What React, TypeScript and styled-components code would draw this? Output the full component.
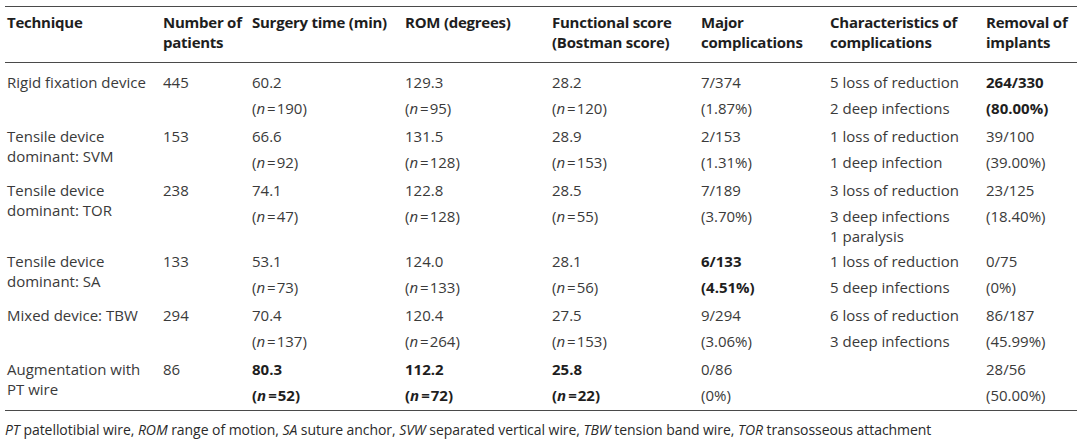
import React from "react";
import styled, { createGlobalStyle } from "styled-components";

const GlobalStyle = createGlobalStyle`
  html, body { margin: 0; padding: 0; background: #ffffff; }
  body { font-family: "Open Sans", "Liberation Sans", sans-serif; }
`;

const Page = styled.div`
  width: 1080px;
  padding: 6px 3px 0 5px;
  box-sizing: border-box;
`;

const Table = styled.table`
  width: 1072px;
  border-collapse: collapse;
  table-layout: fixed;
  border-top: 1px solid #4a4a4a;
  border-bottom: 1px solid #4a4a4a;
`;

const Head = styled.th`
  text-align: left;
  vertical-align: top;
  font-size: 15px;
  font-weight: 700;
  line-height: 20px;
  color: #1e1e1e;
  padding: 5px 2px 10px;
  border-bottom: 1px solid #4a4a4a;
  letter-spacing: -0.25px;
  white-space: nowrap;
`;

type Part = "a" | "b" | "span";

const padTop = (p: { $part: Part; $first?: boolean }) => (p.$part === "b" ? 4 : p.$first ? 9 : 5);
const padBottom = (p: { $part: Part; $last?: boolean; $tight?: boolean }) =>
  p.$tight ? 0 : p.$part === "a" ? 2 : p.$last ? 5 : 3;

const Cell = styled.td<{ $part: Part; $bold?: boolean; $first?: boolean; $last?: boolean; $tight?: boolean }>`
  vertical-align: top;
  font-size: 15px;
  line-height: 20px;
  color: ${(p) => (p.$bold ? "#1e1e1e" : "#3a3a3a")};
  font-weight: ${(p) => (p.$bold ? 700 : 400)};
  padding: ${(p) => padTop(p)}px 2px ${(p) => padBottom(p)}px;
  white-space: nowrap;
`;

const N = styled.span`
  white-space: nowrap;
  i { font-style: italic; }
`;

const Eq = styled.span`
  margin: 0 1px 0 2px;
`;

const Footer = styled.p`
  margin: 0;
  padding: 9px 0 0;
  font-size: 14px;
  line-height: 20px;
  color: #2a2a2a;
  letter-spacing: -0.05px;
  i { font-style: italic; }
`;

type Pair = [string, string];
type Group = {
  tech: string[];
  num: string;
  surg: Pair;
  rom: Pair;
  fn: Pair;
  maj: Pair;
  ch: [string, string[]];
  rem: Pair;
  bold?: { surg?: boolean; rom?: boolean; fn?: boolean; maj?: boolean; rem?: boolean };
};

const groups: Group[] = [
  {
    tech: ["Rigid fixation device"], num: "445",
    surg: ["60.2", "190"], rom: ["129.3", "95"], fn: ["28.2", "120"],
    maj: ["7/374", "(1.87%)"], ch: ["5 loss of reduction", ["2 deep infections"]],
    rem: ["264/330", "(80.00%)"], bold: { rem: true },
  },
  {
    tech: ["Tensile device", "dominant: SVM"], num: "153",
    surg: ["66.6", "92"], rom: ["131.5", "128"], fn: ["28.9", "153"],
    maj: ["2/153", "(1.31%)"], ch: ["1 loss of reduction", ["1 deep infection"]],
    rem: ["39/100", "(39.00%)"],
  },
  {
    tech: ["Tensile device", "dominant: TOR"], num: "238",
    surg: ["74.1", "47"], rom: ["122.8", "128"], fn: ["28.5", "55"],
    maj: ["7/189", "(3.70%)"], ch: ["3 loss of reduction", ["3 deep infections", "1 paralysis"]],
    rem: ["23/125", "(18.40%)"],
  },
  {
    tech: ["Tensile device", "dominant: SA"], num: "133",
    surg: ["53.1", "73"], rom: ["124.0", "133"], fn: ["28.1", "56"],
    maj: ["6/133", "(4.51%)"], ch: ["1 loss of reduction", ["5 deep infections"]],
    rem: ["0/75", "(0%)"], bold: { maj: true },
  },
  {
    tech: ["Mixed device: TBW"], num: "294",
    surg: ["70.4", "137"], rom: ["120.4", "264"], fn: ["27.5", "153"],
    maj: ["9/294", "(3.06%)"], ch: ["6 loss of reduction", ["3 deep infections"]],
    rem: ["86/187", "(45.99%)"],
  },
  {
    tech: ["Augmentation with", "PT wire"], num: "86",
    surg: ["80.3", "52"], rom: ["112.2", "72"], fn: ["25.8", "22"],
    maj: ["0/86", "(0%)"], ch: ["", []],
    rem: ["28/56", "(50.00%)"], bold: { surg: true, rom: true, fn: true },
  },
];

const widths = [156, 89, 153, 147, 149, 129, 156, 93];

const headers: string[][] = [
  ["Technique"],
  ["Number of", "patients"],
  ["Surgery time (min)"],
  ["ROM (degrees)"],
  ["Functional score", "(Bostman score)"],
  ["Major", "complications"],
  ["Characteristics of", "complications"],
  ["Removal of", "implants"],
];

const Lines = ({ lines }: { lines: string[] }) => (
  <>
    {lines.map((l, i) => (
      <React.Fragment key={i}>
        {i > 0 && <br />}
        {l}
      </React.Fragment>
    ))}
  </>
);

const NVal = ({ v }: { v: string }) => (
  <N>
    (<i>n</i>
    <Eq>=</Eq>
    {v})
  </N>
);

export default function App() {
  return (
    <>
      <GlobalStyle />
      <Page>
        <Table>
          <colgroup>
            {widths.map((w, i) => (
              <col key={i} style={{ width: w }} />
            ))}
          </colgroup>
          <thead>
            <tr>
              {headers.map((h, i) => (
                <Head key={i}>
                  <Lines lines={h} />
                </Head>
              ))}
            </tr>
          </thead>
          <tbody>
            {groups.map((g, gi) => {
              const first = gi === 0;
              const last = gi === groups.length - 1;
              const b = g.bold || {};
              const tight = g.ch[1].length > 1;
              return (
                <React.Fragment key={gi}>
                  <tr>
                    <Cell $part="span" $first={first} $last={last} rowSpan={2}>
                      <Lines lines={g.tech} />
                    </Cell>
                    <Cell $part="span" $first={first} $last={last} rowSpan={2}>{g.num}</Cell>
                    <Cell $part="a" $first={first} $bold={b.surg}>{g.surg[0]}</Cell>
                    <Cell $part="a" $first={first} $bold={b.rom}>{g.rom[0]}</Cell>
                    <Cell $part="a" $first={first} $bold={b.fn}>{g.fn[0]}</Cell>
                    <Cell $part="a" $first={first} $bold={b.maj}>{g.maj[0]}</Cell>
                    <Cell $part="a" $first={first}>{g.ch[0]}</Cell>
                    <Cell $part="a" $first={first} $bold={b.rem}>{g.rem[0]}</Cell>
                  </tr>
                  <tr>
                    <Cell $part="b" $last={last} $bold={b.surg}><NVal v={g.surg[1]} /></Cell>
                    <Cell $part="b" $last={last} $bold={b.rom}><NVal v={g.rom[1]} /></Cell>
                    <Cell $part="b" $last={last} $bold={b.fn}><NVal v={g.fn[1]} /></Cell>
                    <Cell $part="b" $last={last} $bold={b.maj}>{g.maj[1]}</Cell>
                    <Cell $part="b" $last={last} $tight={tight}><Lines lines={g.ch[1]} /></Cell>
                    <Cell $part="b" $last={last} $bold={b.rem}>{g.rem[1]}</Cell>
                  </tr>
                </React.Fragment>
              );
            })}
          </tbody>
        </Table>
        <Footer>
          <i>PT</i> patellotibial wire, <i>ROM</i> range of motion, <i>SA</i> suture anchor, <i>SVW</i> separated
          vertical wire, <i>TBW</i> tension band wire, <i>TOR</i> transosseous attachment
        </Footer>
      </Page>
    </>
  );
}
